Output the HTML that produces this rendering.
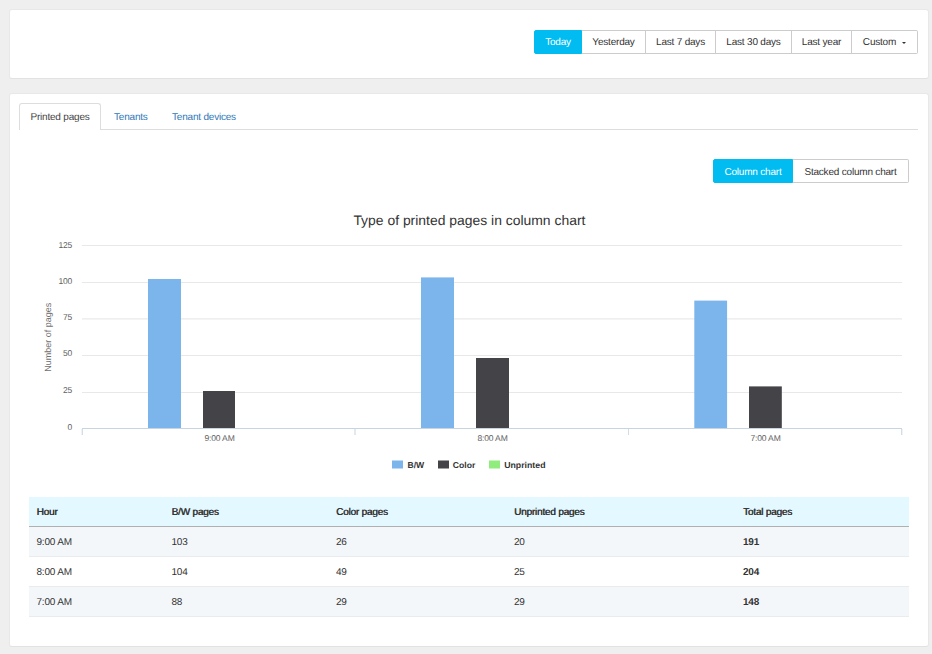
<!DOCTYPE html>
<html><head><meta charset="utf-8">
<style>
*{box-sizing:border-box;margin:0;padding:0}
html,body{width:932px;height:654px;overflow:hidden}
body{background:#efefef;font-family:"Liberation Sans",sans-serif;font-size:10px;color:#333;position:relative;letter-spacing:-0.2px;text-rendering:geometricPrecision}
.panel{position:absolute;left:9px;width:920px;background:#fff;border:1px solid #e8e8e8;border-bottom-color:#e2e2e2;border-radius:3px}
#p1{top:9px;height:70px}
#p2{top:93px;height:554px}
.bg{position:absolute;height:24px;display:flex}
.bg div{height:24px;line-height:24px;border:1px solid #ccc;border-left-width:0;background:#fff;color:#333;text-align:center;font-size:10px;white-space:nowrap}
.bg div:first-child{border-left-width:1px;border-radius:2px 0 0 2px}
.bg div:last-child{border-radius:0 2px 2px 0}
.bg div.on{background:#00bcf1;border-color:#00bcf1;color:#fff}
#g1{left:534px;top:30px}
#g2{left:713px;top:159px}
#g2 div{line-height:26px}
.caret{display:inline-block;width:0;height:0;border-left:2px solid transparent;border-right:2px solid transparent;border-top:2.5px solid #333;vertical-align:middle;margin-left:6px;position:relative;top:0.5px}
#tabline{position:absolute;left:19px;top:129px;width:899px;height:1px;background:#ddd}
#tab1{position:absolute;left:19px;top:103px;width:82px;height:27px;border:1px solid #ddd;border-bottom:0;border-radius:3px 3px 0 0;background:#fff;line-height:28px;text-align:center;color:#444}
.tab{position:absolute;top:104px;line-height:28px;color:#2e77b8}
#chart{position:absolute;left:0;top:0}
table{position:absolute;left:29px;top:497px;width:880px;border-collapse:collapse;table-layout:fixed;font-size:10px}
th{height:29.5px;padding-top:2px;background:#e4f8ff;text-align:left;font-weight:normal;padding-left:7.5px;border-bottom:1px solid #b0b0b0;text-shadow:.4px 0 0 #333;color:#333}
td{height:30px;padding-top:2px;padding-left:7.5px;border-bottom:1px solid #e8ecef;color:#333}
tr:nth-child(even) td{background:#f3f7fa}
td:last-child{font-weight:bold}
</style></head><body>
<div class="panel" id="p1"></div>
<div class="panel" id="p2"></div>
<div class="bg" id="g1">
<div class="on" style="width:48px">Today</div><div style="width:64px">Yesterday</div><div style="width:70px">Last 7 days</div><div style="width:76px">Last 30 days</div><div style="width:60px">Last year</div><div style="width:66px">Custom<span class="caret"></span></div>
</div>
<div id="tabline"></div>
<div id="tab1">Printed pages</div>
<div class="tab" style="left:114px">Tenants</div>
<div class="tab" style="left:172px">Tenant devices</div>
<div class="bg" id="g2">
<div class="on" style="width:80px">Column chart</div><div style="width:116px">Stacked column chart</div>
</div>
<svg id="chart" width="932" height="654" font-family="Liberation Sans, sans-serif" style="letter-spacing:0">
<g fill="#e8e8e8">
<rect x="82" y="245" width="820" height="1"/>
<rect x="82" y="282" width="820" height="1"/>
<rect x="82" y="318" width="820" height="1" fill="#efefef"/><rect x="82" y="319" width="820" height="1" fill="#f4f4f4"/>
<rect x="82" y="355" width="820" height="1"/>
<rect x="82" y="392" width="820" height="1"/>
</g>
<g fill="#7cb5ec">
<rect x="148" y="279" width="33" height="149"/>
<rect x="421" y="277.4" width="33" height="150.6"/>
<rect x="694.3" y="300.6" width="32.8" height="127.4"/>
</g>
<g fill="#434348">
<rect x="203" y="391" width="32" height="37"/>
<rect x="476" y="358" width="33" height="70"/>
<rect x="749" y="386.4" width="32.8" height="41.6"/>
</g>
<g fill="#d3dde8">
<rect x="82" y="428" width="820" height="1" fill="#c8d4e0"/>
<rect x="82" y="429" width="1" height="6"/><rect x="81" y="429" width="1" height="6" fill="#eff3f7"/>
<rect x="354" y="429" width="2" height="6" fill="#e3e9f1"/>
<rect x="628" y="429" width="1" height="6"/>
<rect x="901" y="429" width="1" height="6"/><rect x="902" y="429" width="1" height="6" fill="#eff3f7"/>
</g>
<g font-size="8.5" fill="#606060" text-anchor="end" letter-spacing="-0.2">
<text x="72" y="248">125</text>
<text x="72" y="284">100</text>
<text x="72" y="320">75</text>
<text x="72" y="356">50</text>
<text x="72" y="393">25</text>
<text x="72" y="430">0</text>
</g>
<g font-size="8.5" fill="#606060" text-anchor="middle" letter-spacing="-0.15">
<text x="219.5" y="441">9:00 AM</text>
<text x="492.5" y="441">8:00 AM</text>
<text x="765.5" y="441">7:00 AM</text>
</g>
<text x="51.3" y="337.2" font-size="9" fill="#707070" text-anchor="middle" transform="rotate(-90 51.3 337.2)">Number of pages</text>
<text x="353.4" y="225.4" font-size="13.7" fill="#333" textLength="232" lengthAdjust="spacingAndGlyphs">Type of printed pages in column chart</text>
<rect x="392" y="460.5" width="11" height="8" fill="#7cb5ec"/>
<rect x="438" y="460.5" width="11" height="8" fill="#434348"/>
<rect x="489" y="460.5" width="11" height="8" fill="#90ed7d"/>
<g font-size="8.6" font-weight="bold" fill="#333">
<text x="407.5" y="468">B/W</text>
<text x="452.8" y="468">Color</text>
<text x="504.2" y="468" textLength="41.3" lengthAdjust="spacingAndGlyphs">Unprinted</text>
</g>
</svg>
<table>
<colgroup><col style="width:135px"><col style="width:164.5px"><col style="width:178px"><col style="width:229px"><col></colgroup>
<tr><th>Hour</th><th>B/W pages</th><th>Color pages</th><th>Unprinted pages</th><th>Total pages</th></tr>
<tr><td>9:00 AM</td><td>103</td><td>26</td><td>20</td><td>191</td></tr>
<tr><td>8:00 AM</td><td>104</td><td>49</td><td>25</td><td>204</td></tr>
<tr><td>7:00 AM</td><td>88</td><td>29</td><td>29</td><td>148</td></tr>
</table>
</body></html>
